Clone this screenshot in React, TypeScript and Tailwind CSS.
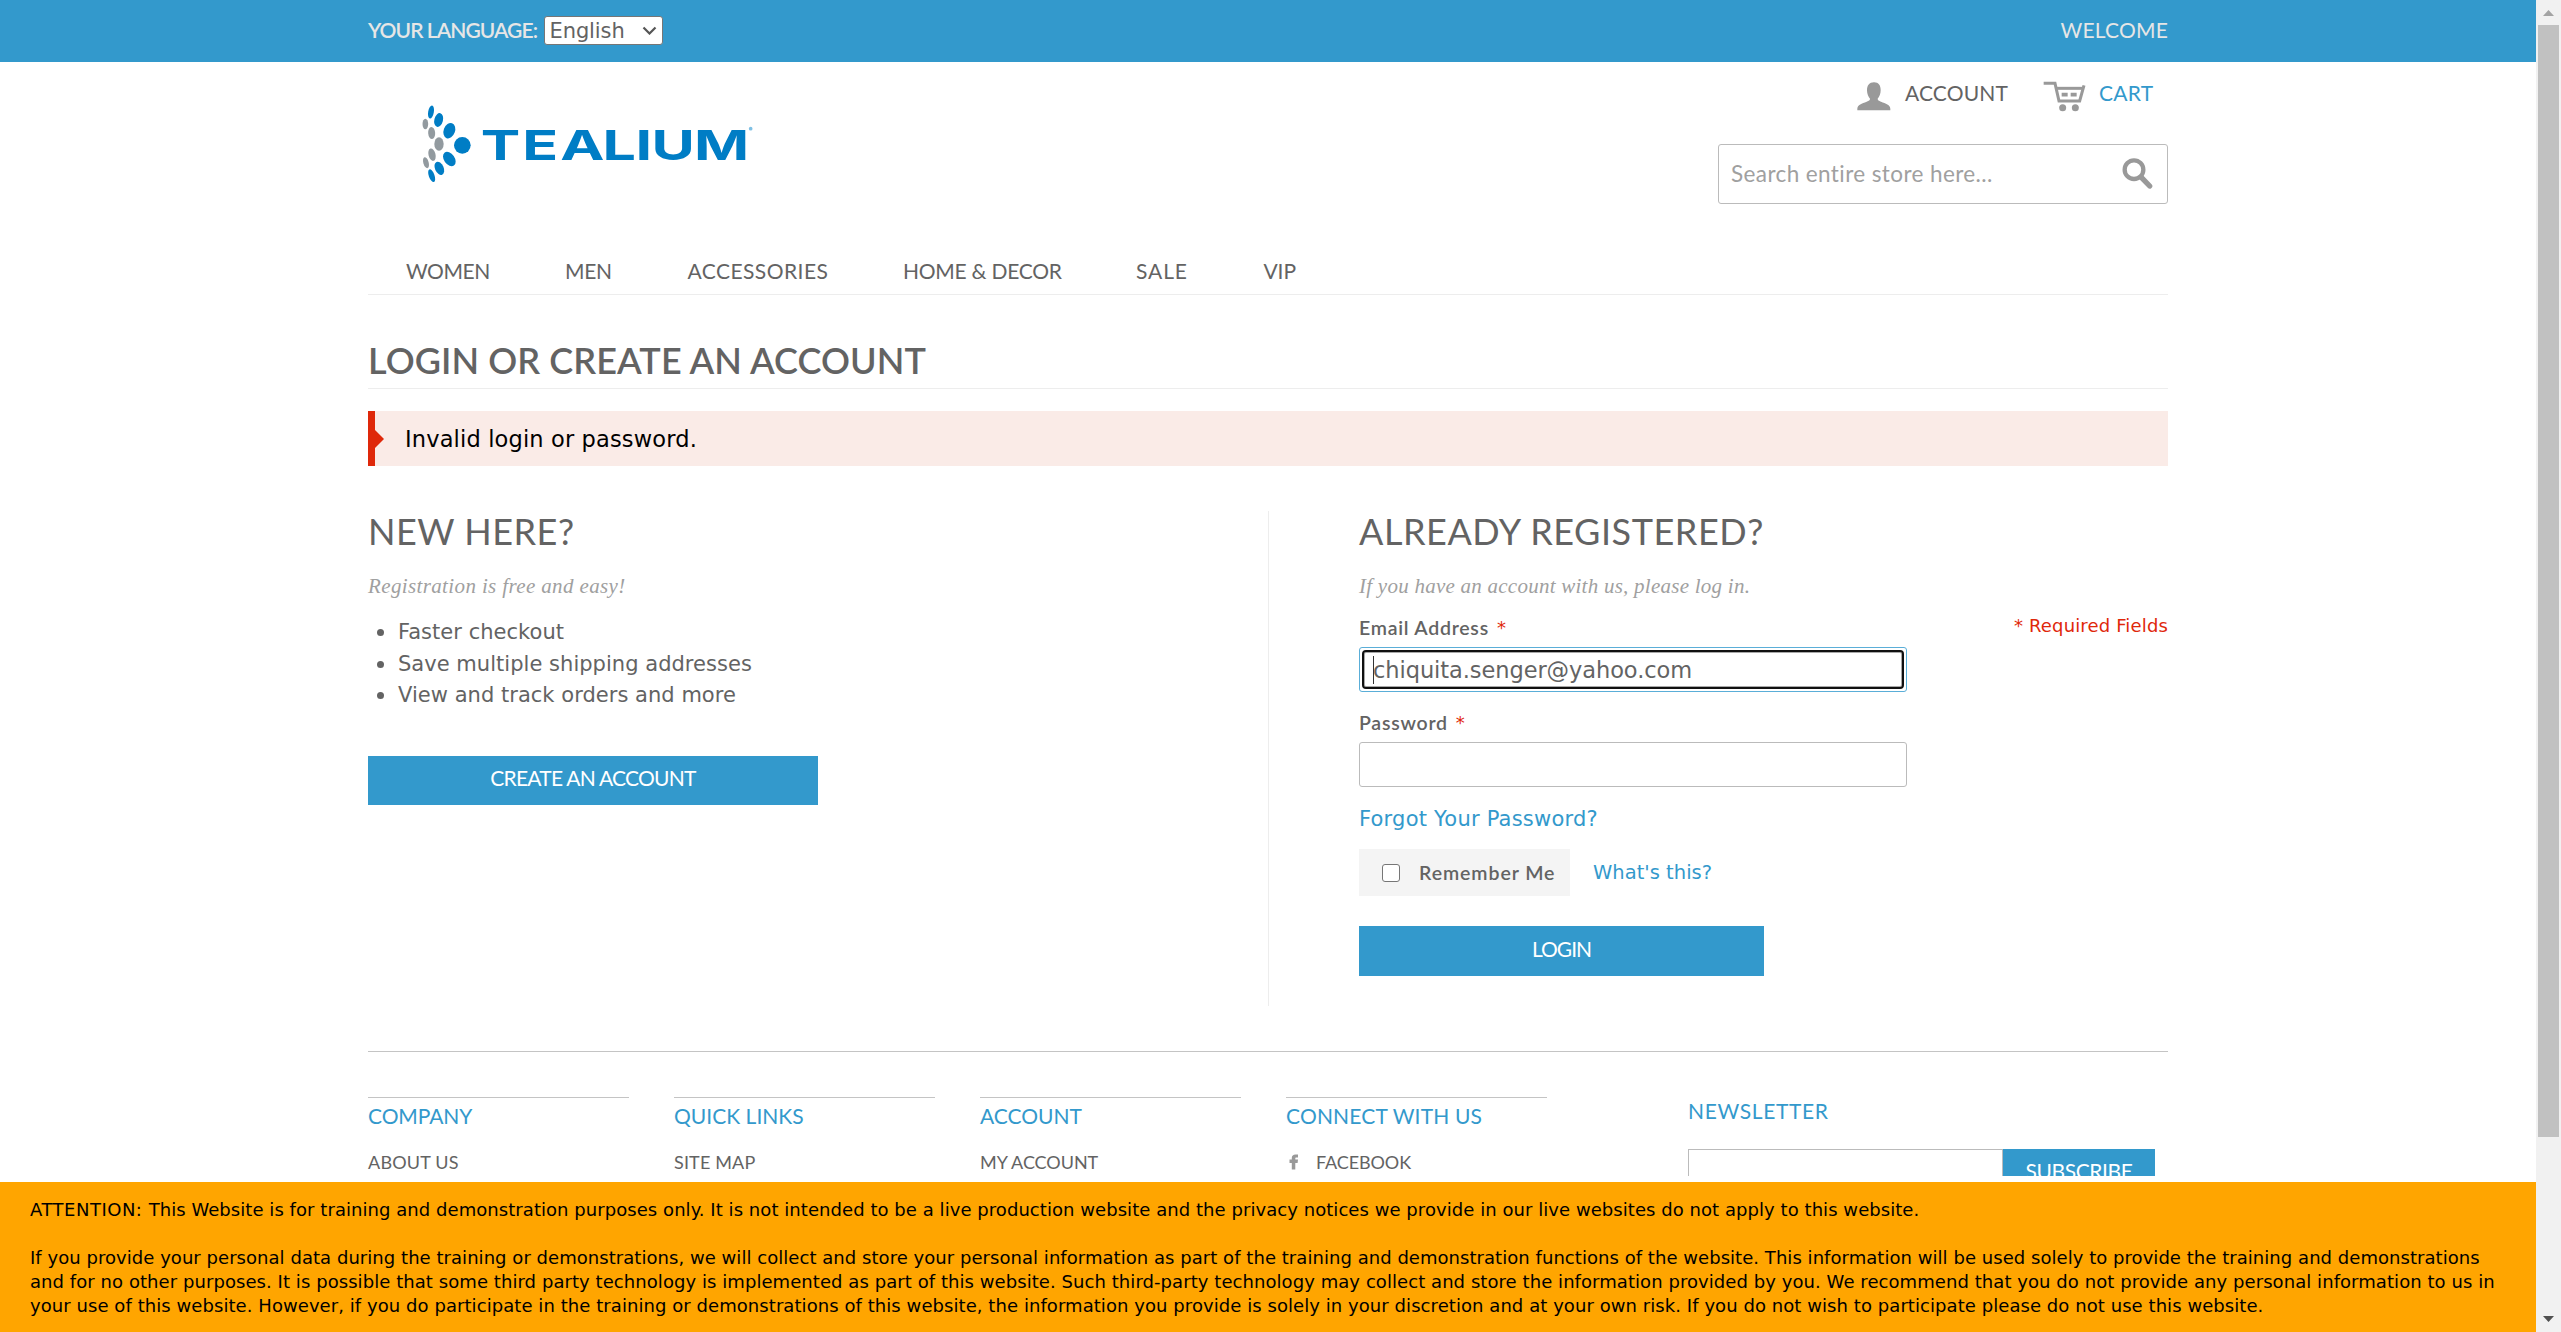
import type { ReactNode } from 'react'

const nav = [
  { label: 'WOMEN', cls: 'w-[159px] tracking-[-0.45px]' },
  { label: 'MEN', cls: 'w-[122.5px] tracking-[-0.35px]' },
  { label: 'ACCESSORIES', cls: 'w-[215.5px] tracking-[0.45px]' },
  { label: 'HOME & DECOR', cls: 'w-[233px] tracking-[-0.25px]' },
  { label: 'SALE', cls: 'w-[127.5px] tracking-[0.9px]' },
  { label: 'VIP', cls: 'tracking-[-0.1px]' },
]

const columns = [
  { title: 'COMPANY', titleCls: 'tracking-[-0.1px]', link: 'ABOUT US', linkCls: 'tracking-[0.2px]' },
  { title: 'QUICK LINKS', titleCls: 'tracking-[0.02px]', link: 'SITE MAP', linkCls: 'tracking-[0.15px]' },
  { title: 'ACCOUNT', titleCls: 'tracking-[-0.02px]', link: 'MY ACCOUNT', linkCls: 'tracking-[-0.05px]' },
  { title: 'CONNECT WITH US', titleCls: 'tracking-[0.17px]', link: 'FACEBOOK', linkCls: 'tracking-[-0.1px]', icon: true },
]

function Logo() {
  return (
    <svg className="h-[87px] w-[340px]" viewBox="200 300 1020 261">
      <g fill="#007dc5">
        <ellipse cx="242" cy="336" rx="8.5" ry="20" transform="rotate(10 242 336)" />
        <ellipse cx="265" cy="360" rx="13" ry="21" transform="rotate(14 265 360)" />
        <ellipse cx="297" cy="392" rx="17" ry="24" transform="rotate(20 297 392)" />
        <circle cx="336" cy="436" r="25" />
        <ellipse cx="297" cy="477" rx="16" ry="24" transform="rotate(-35 297 477)" />
        <ellipse cx="267" cy="505" rx="13" ry="21" transform="rotate(-24 267 505)" />
        <ellipse cx="244" cy="527" rx="8.5" ry="20" transform="rotate(-20 244 527)" />
      </g>
      <g fill="#929a9f">
        <ellipse cx="225" cy="372" rx="8.5" ry="16" />
        <ellipse cx="244" cy="399" rx="10.5" ry="18" transform="rotate(-4 244 399)" />
        <ellipse cx="266" cy="432" rx="14" ry="20" />
        <ellipse cx="245" cy="464" rx="10.5" ry="19" transform="rotate(-14 245 464)" />
        <ellipse cx="227" cy="488" rx="8" ry="17" transform="rotate(-16 227 488)" />
      </g>
      <text
        x="275.5 363 443.5 532.5 602.5 636.5 726"
        y="479"
        transform="scale(1.42 1)"
        fill="#007dc5"
        fontFamily="Inter, sans-serif"
        fontWeight="700"
        fontSize="125"
      >
        TEALIUM
      </text>
      <circle cx="1201" cy="386" r="5.5" fill="#7fc0e4" />
    </svg>
  )
}

function AccountIcon() {
  return (
    <svg className="h-[30px] w-[34px]" viewBox="530 244 102 90" fill="#999">
      <path d="M581 245c14 0 20 9 20 24 0 11-4 19-9 25 0 5 3 6 10 9 14 5 28 10 28 21v5h-99v-5c0-11 14-16 28-21 7-3 10-4 10-9-5-6-9-14-9-25 0-15 7-24 21-24z" />
    </svg>
  )
}

function CartIcon() {
  return (
    <svg className="h-[31px] w-[43px]" viewBox="1088 243 129 93" fill="none" stroke="#999">
      <path d="M1090 250h34l12 53h62l13-47" strokeWidth="9" />
      <path d="M1127 265h83" strokeWidth="9" />
      <path d="M1144 284h18M1171 284h18" strokeWidth="11" />
      <circle cx="1147" cy="323" r="10.5" fill="#999" stroke="none" />
      <circle cx="1185" cy="323" r="10.5" fill="#999" stroke="none" />
    </svg>
  )
}

function SearchIcon() {
  return (
    <svg className="h-[31px] w-[31px]" viewBox="1326 473 93 93" fill="none" stroke="#999">
      <circle cx="1362" cy="508" r="28" strokeWidth="13" />
      <path d="M1384 531l25 26" strokeWidth="16" strokeLinecap="round" />
    </svg>
  )
}

function FacebookIcon() {
  return (
    <svg className="h-[16px] w-[10px]" viewBox="0 0 10 16" fill="#999">
      <path d="M2.800 15.500V8.900H.5V5.600h2.300V4C2.800 1.700 4.100.4 6.600.4c1 0 1.800.1 2.400.2v2.800H7.500C6.500 3.400 6.300 3.800 6.300 4.500v1.100h2.700l-.4 3.300H6.300v6.600z" />
    </svg>
  )
}

function Label({ children, cls }: { children: ReactNode; cls: string }) {
  return (
    <div className={`flex h-[30px] font-['Lato',sans-serif] text-[19.5px] leading-[30px] font-semibold ${cls}`}>
      {children}
      <span className="ml-[8px] font-['DejaVu_Sans',sans-serif] text-[18px] leading-[30px] font-normal tracking-normal text-[#df280a]">*</span>
    </div>
  )
}

export default function App() {
  return (
    <div className="flex h-[1332px] w-[2561px] overflow-hidden bg-white font-['DejaVu_Sans',sans-serif] text-[#636363]">
      <div className="flex w-[2536px] flex-col">
        <div className="h-[1176px] overflow-hidden">
          <div className="h-[62px] bg-[#3399cc]">
            <div className="mx-auto flex h-[60px] w-[1800px] items-center font-['Lato',sans-serif] text-[21px] leading-[60px] text-[#e6e6e6]">
              <span className="w-[175.500px] font-semibold tracking-[-0.93px] whitespace-nowrap">YOUR LANGUAGE:</span>
              <div className="flex h-[29px] w-[119px] items-center justify-between rounded-[3px] border border-[#767676] bg-white pr-[5px] pl-[5px] font-['DejaVu_Sans',sans-serif] text-[21px] leading-[27px] tracking-[-0.1px] text-[#636363]">
                <span className="pt-[2px] leading-[25px]">English</span>
                <svg className="h-[9px] w-[15px]" viewBox="0 0 15 9" fill="none" stroke="#555" strokeWidth="2.200">
                  <path d="M1.500 1.500l6 6 6-6" />
                </svg>
              </div>
              <span className="ml-auto tracking-[0.2px]">WELCOME</span>
            </div>
          </div>

          <header className="mx-auto flex h-[233px] w-[1800px] flex-col border-b border-[#ededed]">
            <div className="flex h-[186px] justify-between">
              <div className="pt-[38px] pl-[49px]">
                <Logo />
              </div>
              <div className="w-[450px] pt-[16px]">
                <div className="flex h-[32px] items-start pl-[139px] font-['Lato',sans-serif] text-[21px] leading-[30px]">
                  <span className="mt-[4px]"><AccountIcon /></span>
                  <span className="ml-[14px] w-[103px] tracking-[0.15px]">ACCOUNT</span>
                  <span className="mt-[3px] ml-[35px]"><CartIcon /></span>
                  <span className="ml-[13px] tracking-[0.3px] text-[#3399cc]">CART</span>
                </div>
                <div className="mt-[34px] flex h-[60px] items-start justify-between rounded-[3px] border border-[#bbb] pt-[13px] pr-[14px] pl-[12px]">
                  <span className="pt-[1px] font-['Lato',sans-serif] text-[22.5px] leading-[30px] tracking-[0.4px] text-[#a0a0a0]">Search entire store here...</span>
                  <SearchIcon />
                </div>
              </div>
            </div>
            <nav className="flex pt-[8px] pl-[38px] font-['Lato',sans-serif] text-[21px] leading-[30px]">
              {nav.map((n) => (
                <span key={n.label} className={`whitespace-nowrap ${n.cls}`}>{n.label}</span>
              ))}
            </nav>
          </header>

          <main className="mx-auto w-[1800px]">
            <h1 className="h-[94px] border-b border-[#ededed] pt-[40px] font-['Lato',sans-serif] text-[36px] leading-[50px] font-semibold tracking-[0.09px]">
              LOGIN OR CREATE AN ACCOUNT
            </h1>
            <div className="mt-[22px] flex h-[55px] items-center border-l-[7px] border-[#df280a] bg-[#faebe7] text-[22.5px] leading-[55px] tracking-[0.15px] text-black">
              <svg className="h-[18px] w-[9px]" viewBox="0 0 9 18" fill="#df280a">
                <path d="M0 0l9 9-9 9z" />
              </svg>
              <span className="ml-[21px] pt-[1px] leading-[54px]">Invalid login or password.</span>
            </div>

            <div className="mt-[45px] flex h-[495px]">
              <section className="w-[901px] border-r border-[#ededed]">
                <h2 className="font-['Lato',sans-serif] text-[36px] leading-[40px] font-normal tracking-[0.5px]">NEW HERE?</h2>
                <p className="mt-[20px] font-['Liberation_Serif',serif] text-[21px] leading-[30px] tracking-[0.37px] text-[#a0a0a0] italic">Registration is free and easy!</p>
                <ul className="mt-[16px] text-[21px] leading-[31.5px]">
                  {['Faster checkout', 'Save multiple shipping addresses', 'View and track orders and more'].map((t) => (
                    <li key={t} className="flex items-center pl-[9px]">
                      <span className="mr-[14px] size-[7px] rounded-full bg-[#636363]" />
                      <span className="tracking-[0.03px]">{t}</span>
                    </li>
                  ))}
                </ul>
                <button className="mt-[44px] block h-[49px] w-[450px] bg-[#3399cc] pb-[5px] font-['Lato',sans-serif] text-[21px] leading-[44px] tracking-[-0.75px] text-white">CREATE AN ACCOUNT</button>
              </section>

              <section className="flex flex-1 justify-between pl-[90px]">
                <div className="w-[548px]">
                  <h2 className="font-['Lato',sans-serif] text-[36px] leading-[40px] font-normal tracking-[0.55px] whitespace-nowrap">ALREADY REGISTERED?</h2>
                  <p className="mt-[20px] font-['Liberation_Serif',serif] text-[21px] leading-[30px] tracking-[0.25px] text-[#a0a0a0] italic">If you have an account with us, please log in.</p>
                  <div className="mt-[12px]"><Label cls="tracking-[0.75px]">Email Address</Label></div>
                  <div className="mt-[4px] h-[45px] rounded-[3px] border border-[#5aaed8] p-[2px]">
                    <div className="flex h-[39px] items-center rounded-[4px] border-2 border-[#101010] pl-[9px] text-[22.5px] leading-[33px] tracking-[-0.07px] ring-1 ring-[#a8a8a8] ring-inset">
                      <span className="h-[28px] w-px bg-[#333]" />
                      <span className="-ml-px pt-[2px]">chiquita.senger@yahoo.com</span>
                    </div>
                  </div>
                  <div className="mt-[16px]"><Label cls="tracking-[0.75px]">Password</Label></div>
                  <div className="mt-[4px] h-[45px] rounded-[3px] border border-[#bbb]" />
                  <a className="mt-[17px] block text-[21px] leading-[30px] tracking-[0.22px] text-[#3399cc]">Forgot Your Password?</a>
                  <div className="mt-[15px] flex h-[47px] items-center">
                    <div className="flex h-[47px] w-[211px] items-center bg-[#f4f4f4] pl-[23px]">
                      <span className="size-[18px] rounded-[3px] border-[1.500px] border-[#767676] bg-white" />
                      <span className="ml-[19px] font-['Lato',sans-serif] text-[19.5px] leading-[46px] font-semibold tracking-[0.93px] whitespace-nowrap">Remember Me</span>
                    </div>
                    <a className="ml-[23px] text-[19.5px] leading-[46px] tracking-[0.02px] text-[#3399cc]">What's this?</a>
                  </div>
                  <button className="mt-[30px] block h-[50px] w-[405px] bg-[#3399cc] pb-[4px] font-['Lato',sans-serif] text-[21px] leading-[46px] tracking-[-1.03px] text-white">LOGIN</button>
                </div>
                <p className="pt-[100px] text-[18px] leading-[30px] tracking-[0.15px] text-[#df280a]">* Required Fields</p>
              </section>
            </div>
          </main>

          <footer className="mx-auto mt-[45px] flex w-[1800px] border-t border-[#c4c4c4] pt-[45px] font-['Lato',sans-serif]">
            {columns.map((c) => (
              <div key={c.title} className="mr-[45px] w-[261px] border-t border-[#c4c4c4]">
                <h3 className={`mt-[3px] text-[21px] leading-[30px] text-[#3399cc] ${c.titleCls}`}>{c.title}</h3>
                <a className={`mt-[16px] flex items-center text-[18px] leading-[30px] ${c.linkCls}`}>
                  {c.icon && <span className="mr-[17px] ml-[3px]"><FacebookIcon /></span>}
                  {c.link}
                </a>
              </div>
            ))}
            <div className="ml-[96px] w-[467px]">
              <h3 className="mt-[-1px] text-[21px] leading-[30px] tracking-[0.65px] text-[#3399cc]">NEWSLETTER</h3>
              <div className="mt-[23px] flex">
                <div className="h-[45px] w-[315px] border border-[#bbb]" />
                <button className="h-[45px] w-[152px] bg-[#3399cc] pb-[2px] text-[21px] leading-[43px] tracking-[-0.4px] text-white">SUBSCRIBE</button>
              </div>
            </div>
          </footer>
        </div>

        <div className="mt-[6px] h-[150px] bg-[#ffa500] pt-[16px] pl-[30px] text-[18px] leading-[24px] tracking-[0.065px] whitespace-nowrap text-black">
          <p>
            <span className="tracking-[0.5px]">ATTENTION: </span>
            <span className="tracking-[0.055px]">This Website is for training and demonstration purposes only. It is not intended to be a live production website and the privacy notices we provide in our live websites do not apply to this website.</span>
          </p>
          <p className="mt-[24px]">
            <span className="tracking-[0.045px]">If you provide your personal data during the training or demonstrations, we will collect and store your personal information as part of the training and demonstration functions of the website. This information will be used solely to provide the training and demonstrations</span>
            <br />
            and for no other purposes. It is possible that some third party technology is implemented as part of this website. Such third-party technology may collect and store the information provided by you. We recommend that you do not provide any personal information to us in
            <br />
            your use of this website. However, if you do participate in the training or demonstrations of this website, the information you provide is solely in your discretion and at your own risk. If you do not wish to participate please do not use this website.
          </p>
        </div>
      </div>

      <div className="flex w-[25px] flex-col items-center bg-[#f1f1f1]">
        <svg className="mt-[10px] h-[6px] w-[11px]" viewBox="0 0 11 6" fill="#a3a3a3">
          <path d="M0 6L5.500 0 11 6z" />
        </svg>
        <div className="mt-[9px] h-[1112px] w-[21px] bg-[#c1c1c1]" />
        <svg className="mt-[179px] h-[6px] w-[11px]" viewBox="0 0 11 6" fill="#505050">
          <path d="M0 0h11L5.500 6z" />
        </svg>
      </div>
    </div>
  )
}
